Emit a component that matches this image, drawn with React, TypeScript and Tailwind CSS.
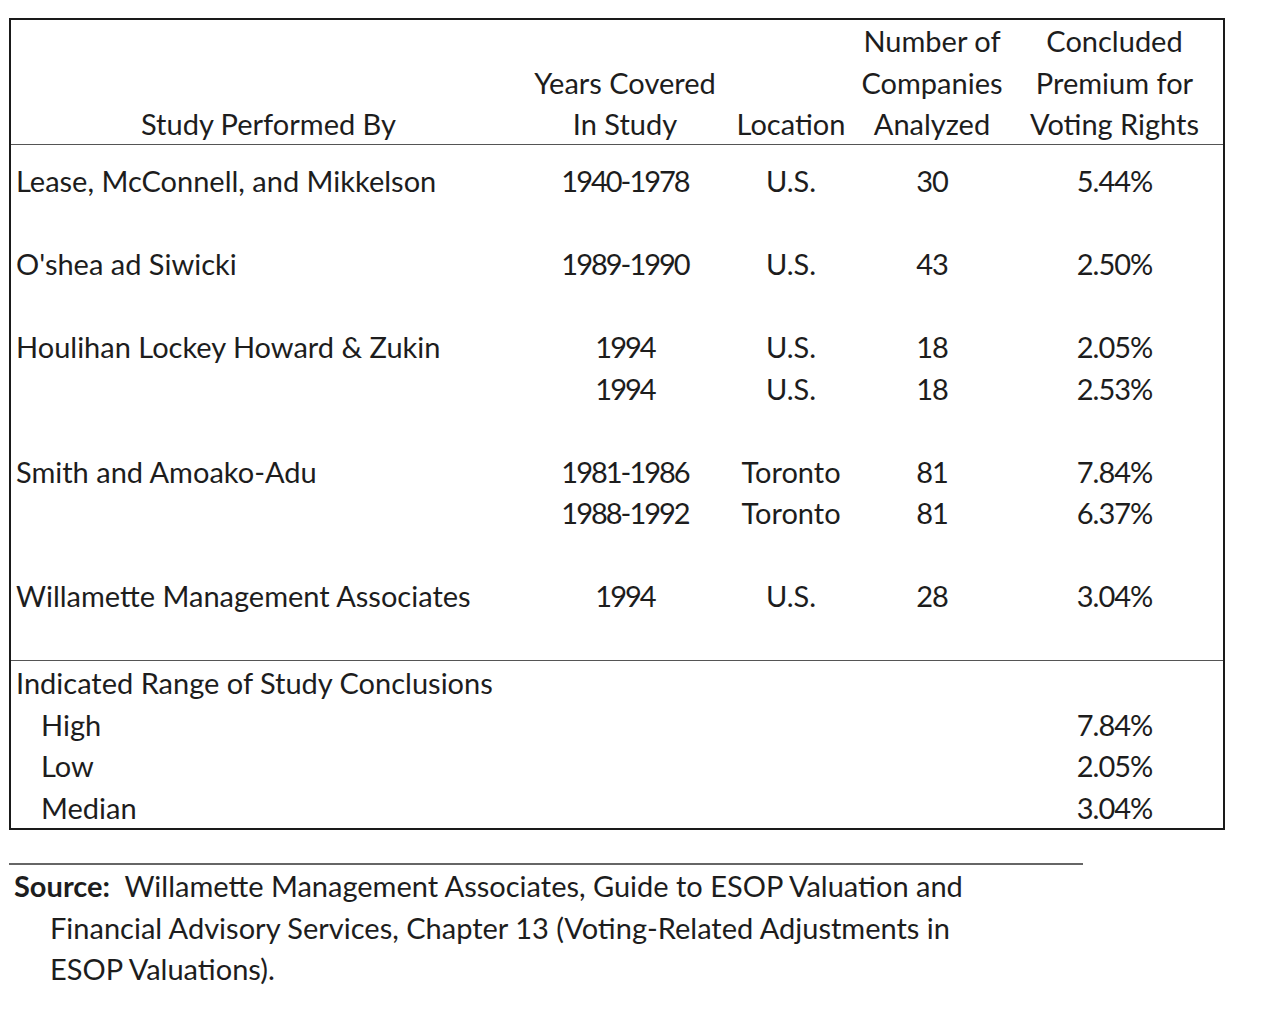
const cols = 'grid grid-cols-[515px_198px_134px_148px_1fr]';

const rows = [
  { by: 'Lease, McConnell, and Mikkelson', lines: [['1940-1978', 'U.S.', '30', '5.44%']] },
  { by: "O'shea ad Siwicki", lines: [['1989-1990', 'U.S.', '43', '2.50%']] },
  {
    by: 'Houlihan Lockey Howard & Zukin',
    lines: [
      ['1994', 'U.S.', '18', '2.05%'],
      ['1994', 'U.S.', '18', '2.53%'],
    ],
  },
  {
    by: 'Smith and Amoako-Adu',
    lines: [
      ['1981-1986', 'Toronto', '81', '7.84%'],
      ['1988-1992', 'Toronto', '81', '6.37%'],
    ],
  },
  { by: 'Willamette Management Associates', lines: [['1994', 'U.S.', '28', '3.04%']] },
];

const range = [
  ['High', '7.84%'],
  ['Low', '2.05%'],
  ['Median', '3.04%'],
];

function StudyRow({ row }) {
  return (
    <div className="pb-[41.5px]">
      {row.lines.map((line, i) => (
        <div key={i} className={cols}>
          <div className="pl-[5px]">{i === 0 ? row.by : ''}</div>
          <div className="text-center tracking-[-2px]">{line[0]}</div>
          <div className="text-center">{line[1]}</div>
          <div className="text-center tracking-[-1px]">{line[2]}</div>
          <div className="text-center tracking-[-1px]">{line[3]}</div>
        </div>
      ))}
    </div>
  );
}

export default function App() {
  return (
    <div
      className="min-h-[1032px] bg-white pl-[9px] pt-[18px] text-[29px] leading-[41.5px] text-[#1d1d1d]"
      style={{ fontFamily: 'Lato, "Open Sans", sans-serif' }}
    >
      <div className="w-[1216px] border-2 border-[#1a1a1a]">
        {/* header */}
        <div className={`${cols} h-[125px] items-end border-b-[1.5px] border-[#555] pb-px text-center`}>
          <div>Study Performed By</div>
          <div>
            Years Covered
            <br />
            In Study
          </div>
          <div>Location</div>
          <div>
            Number of
            <br />
            Companies
            <br />
            Analyzed
          </div>
          <div>
            Concluded
            <br />
            Premium for
            <br />
            Voting Rights
          </div>
        </div>

        {/* studies */}
        <div className="border-b-[1.5px] border-[#555] pb-[2px] pt-[15px]">
          {rows.map((row) => (
            <StudyRow key={row.by} row={row} />
          ))}
        </div>

        {/* range */}
        <div className="pt-[1px]">
          <div className="pl-[5px]">Indicated Range of Study Conclusions</div>
          {range.map(([label, value]) => (
            <div key={label} className={cols}>
              <div className="pl-[30px]">{label}</div>
              <div />
              <div />
              <div />
              <div className="text-center tracking-[-1px]">{value}</div>
            </div>
          ))}
        </div>
      </div>

      {/* source note */}
      <div className="mt-[33px] w-[1074px] border-t-2 border-[#666] text-[#1d1d1d]">
        <p className="pl-[5px]">
          <span className="font-bold">Source:</span>&nbsp; Willamette Management Associates, Guide to ESOP Valuation and
        </p>
        <p className="pl-[41px]">Financial Advisory Services, Chapter 13 (Voting-Related Adjustments in</p>
        <p className="pl-[41px]">ESOP Valuations).</p>
      </div>
    </div>
  );
}
